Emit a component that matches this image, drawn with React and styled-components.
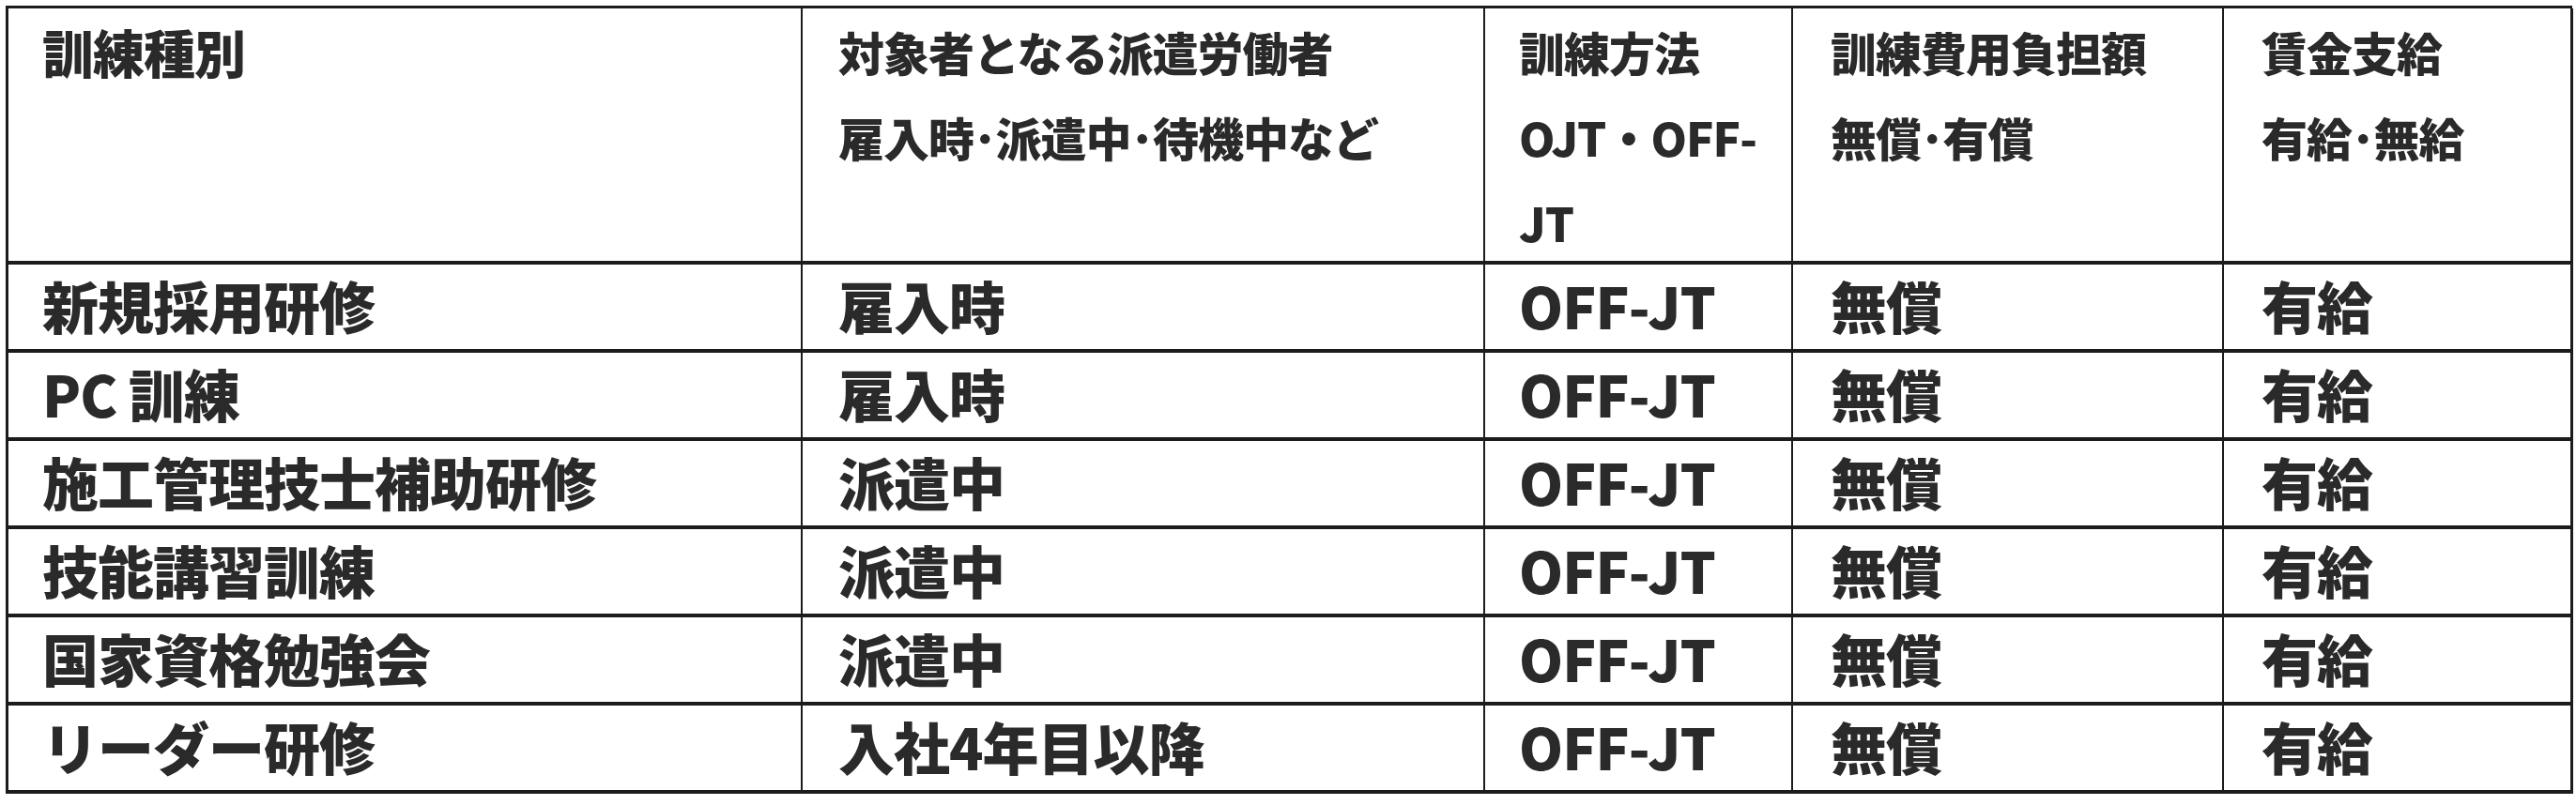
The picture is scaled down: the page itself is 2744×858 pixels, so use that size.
import React from 'react';
import styled, { createGlobalStyle } from 'styled-components';

const GlobalStyle = createGlobalStyle`
  html, body {
    margin: 0;
    padding: 0;
    background: #ffffff;
  }
  * {
    box-sizing: border-box;
  }
`

const Page = styled.div`
  padding: 6px 0 0 6px;
  font-family: "Noto Sans CJK JP", "Noto Sans", sans-serif;
  color: #2a2a2a;
`

const Grid = styled.div`
  display: grid;
  grid-template-columns: 846px 727px 328px 459px 372px;
  grid-template-rows: 273px repeat(6, 94px);
  width: 2734px;
  border-top: 3px solid #1c1c1c;
  border-left: 3px solid #1c1c1c;
`

const Cell = styled.div`
  border-right: ${props => props.$last ? 3 : 2}px solid #1c1c1c;
  border-bottom: 4px solid #1c1c1c;
  padding-left: ${props => props.$pad || 36}px;
  overflow: hidden;
  white-space: nowrap;
`

const HeadCell = styled(Cell)`
  font-size: ${props => props.$size || 49}px;
  font-weight: 900;
  line-height: 91px;
  letter-spacing: -1px;
`

const Line = styled.div`
  height: 91px;
`

const BodyCell = styled(Cell)`
  display: flex;
  align-items: center;
  padding-bottom: 5px;
  font-size: 60px;
  font-weight: 900;
  line-height: 1;
  letter-spacing: -1px;
`

const headers = [
  { lines: ['訓練種別'], size: 55 },
  { lines: ['対象者となる派遣労働者', '雇入時･派遣中･待機中など'] },
  { lines: ['訓練方法', 'OJT・OFF-', 'JT'] },
  { lines: ['訓練費用負担額', '無償･有償'] },
  { lines: ['賃金支給', '有給･無給'] },
]

const rows = [
  ['新規採用研修', '雇入時', 'OFF-JT', '無償', '有給'],
  ['PC 訓練', '雇入時', 'OFF-JT', '無償', '有給'],
  ['施工管理技士補助研修', '派遣中', 'OFF-JT', '無償', '有給'],
  ['技能講習訓練', '派遣中', 'OFF-JT', '無償', '有給'],
  ['国家資格勉強会', '派遣中', 'OFF-JT', '無償', '有給'],
  ['リーダー研修', '入社4年目以降', 'OFF-JT', '無償', '有給'],
]

const pads = [36, 38, 36, 40, 40]

export default function App() {
  return (
    <Page>
      <GlobalStyle />
      <Grid>
        {headers.map((h, i) => (
          <HeadCell key={'h' + i} $size={h.size} $pad={pads[i]} $last={i === 4}>
            {h.lines.map(line => <Line key={line}>{line}</Line>)}
          </HeadCell>
        ))}
        {rows.map((row, r) =>
          row.map((text, c) => (
            <BodyCell key={r + '-' + c} $pad={pads[c]} $last={c === 4}>
              {text}
            </BodyCell>
          ))
        )}
      </Grid>
    </Page>
  )
}
